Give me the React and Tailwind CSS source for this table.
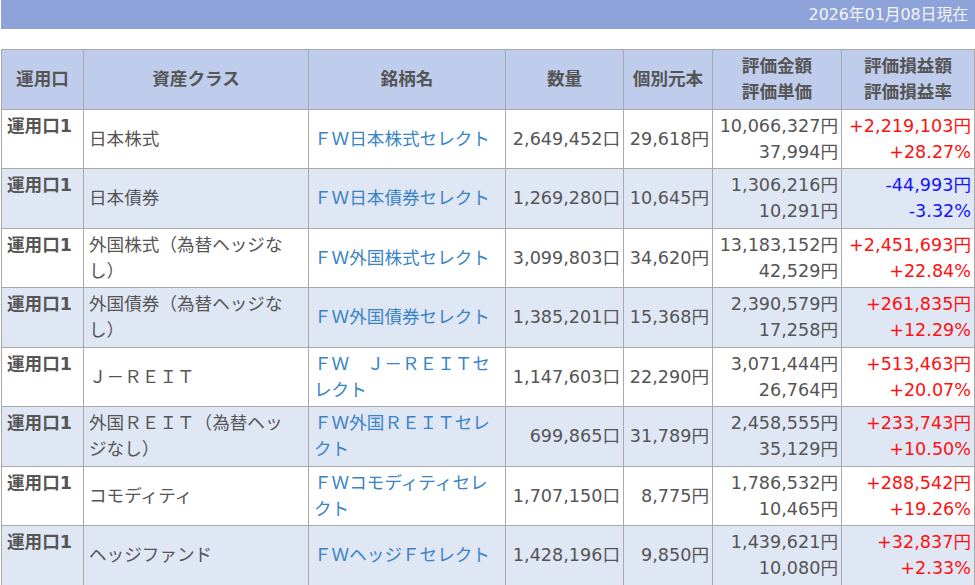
import React from 'react';

const rows = [
  { cls: '日本株式', fund: 'ＦＷ日本株式セレクト', qty: '2,649,452口', base: '29,618円', amt: '10,066,327円', unit: '37,994円', pl: '+2,219,103円', rate: '+28.27%' },
  { cls: '日本債券', fund: 'ＦＷ日本債券セレクト', qty: '1,269,280口', base: '10,645円', amt: '1,306,216円', unit: '10,291円', pl: '-44,993円', rate: '-3.32%' },
  { cls: '外国株式（為替ヘッジなし）', fund: 'ＦＷ外国株式セレクト', qty: '3,099,803口', base: '34,620円', amt: '13,183,152円', unit: '42,529円', pl: '+2,451,693円', rate: '+22.84%' },
  { cls: '外国債券（為替ヘッジなし）', fund: 'ＦＷ外国債券セレクト', qty: '1,385,201口', base: '15,368円', amt: '2,390,579円', unit: '17,258円', pl: '+261,835円', rate: '+12.29%' },
  { cls: 'Ｊ－ＲＥＩＴ', fund: 'ＦＷ　Ｊ－ＲＥＩＴセレクト', qty: '1,147,603口', base: '22,290円', amt: '3,071,444円', unit: '26,764円', pl: '+513,463円', rate: '+20.07%' },
  { cls: ['外国ＲＥＩＴ（為替ヘッ', 'ジなし）'], fund: 'ＦＷ外国ＲＥＩＴセレクト', qty: '699,865口', base: '31,789円', amt: '2,458,555円', unit: '35,129円', pl: '+233,743円', rate: '+10.50%' },
  { cls: 'コモディティ', fund: 'ＦＷコモディティセレクト', qty: '1,707,150口', base: '8,775円', amt: '1,786,532円', unit: '10,465円', pl: '+288,542円', rate: '+19.26%' },
  { cls: 'ヘッジファンド', fund: 'ＦＷヘッジＦセレクト', qty: '1,428,196口', base: '9,850円', amt: '1,439,621円', unit: '10,080円', pl: '+32,837円', rate: '+2.33%' },
];

const th = 'border border-[#a9a9a9] px-[5px] py-[3.25px] text-center align-middle font-bold';
const td = 'border border-[#a9a9a9] px-[5px] py-[3.25px] align-middle';
const num = 'border border-[#a9a9a9] px-[3px] py-[3.25px] align-middle text-right whitespace-nowrap';

export default function App() {
  return (
    <div className="pl-px font-['DejaVu_Sans','Noto_Sans_CJK_JP',sans-serif] text-[#555]">
      {/* header bar */}
      <div className="h-[29px] bg-[#8ea3da] flex items-center justify-end pr-[7px] text-[15.8px] text-[#f4f4f4]">
        2026年01月08日現在
      </div>

      <table className="mt-[20px] w-[973px] table-fixed border-collapse text-[17.6px] leading-[26px]">
        <colgroup>
          <col className="w-[82px]" />
          <col className="w-[225px]" />
          <col className="w-[197px]" />
          <col className="w-[118px]" />
          <col className="w-[89px]" />
          <col className="w-[129px]" />
          <col className="w-[133px]" />
        </colgroup>
        <thead>
          <tr className="bg-[#bfcceb]">
            <th className={th}>運用口</th>
            <th className={th}>資産クラス</th>
            <th className={th}>銘柄名</th>
            <th className={th}>数量</th>
            <th className={th}>個別元本</th>
            <th className={th}>評価金額<br />評価単価</th>
            <th className={th}>評価損益額<br />評価損益率</th>
          </tr>
        </thead>
        <tbody>
          {rows.map((r, i) => {
            const neg = r.pl.startsWith('-');
            return (
              <tr key={i} className={i % 2 === 1 ? 'bg-[#dfe6f4]' : 'bg-white'}>
                <td className="border border-[#a9a9a9] px-[5px] py-[3.25px] align-top font-bold whitespace-nowrap">運用口1</td>
                <td className={td}>
                  {Array.isArray(r.cls) ? (<>{r.cls[0]}<br />{r.cls[1]}</>) : r.cls}
                </td>
                <td className={td + ' text-[#3a84c6]'}>{r.fund}</td>
                <td className={num}>{r.qty}</td>
                <td className={num}>{r.base}</td>
                <td className={num}>{r.amt}<br />{r.unit}</td>
                <td className={num + (neg ? ' text-[#1414ff]' : ' text-[#ff1010]')}>{r.pl}<br />{r.rate}</td>
              </tr>
            );
          })}
        </tbody>
      </table>
    </div>
  );
}
